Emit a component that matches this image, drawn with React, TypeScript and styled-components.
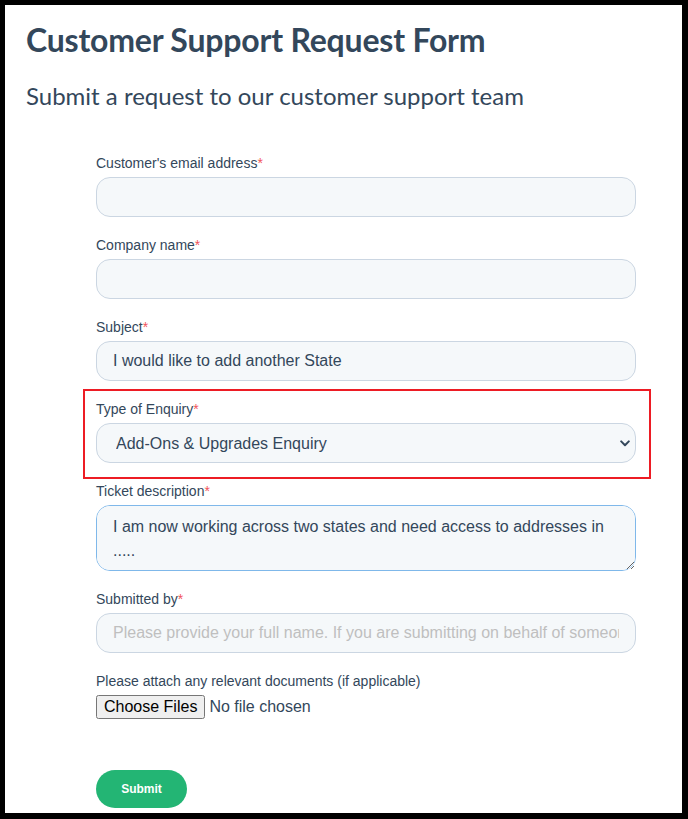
import React from "react";
import styled, { createGlobalStyle } from "styled-components";

const Global = createGlobalStyle`
  html, body { margin: 0; padding: 0; background: #ffffff; }
  * { box-sizing: border-box; }
`;

const Frame = styled.div`
  width: 688px;
  height: 819px;
  border-style: solid;
  border-color: #000;
  border-width: 5px 6px 6px 5px;
  background: #fff;
  padding: 0 0 0 21px;
  overflow: hidden;
  color: #33475b;
`;

const Title = styled.h1`
  margin: 16px 0 0;
  font-family: Lato, "Noto Sans", sans-serif;
  font-weight: 700;
  font-size: 32px;
  line-height: 38px;
  color: #33475b;
  letter-spacing: -0.2px;
`;

const Subtitle = styled.h2`
  margin: 22px 0 0;
  font-family: Lato, "Noto Sans", sans-serif;
  font-weight: 400;
  font-size: 24px;
  line-height: 30px;
  color: #33475b;
`;

const Form = styled.form`
  width: 540px;
  margin: 42px 0 0 70px;
  font-family: "Liberation Sans", Arial, sans-serif;
`;

const Field = styled.div`
  position: relative;
  margin-bottom: 18px;
`;

const Highlight = styled.span`
  position: absolute;
  top: -10px;
  left: -13px;
  right: -15px;
  bottom: -16px;
  border: 2px solid #ed1c24;
  pointer-events: none;
`;

const Label = styled.label`
  display: block;
  font-size: 14px;
  line-height: 20px;
  color: #33475b;
  margin-bottom: 4px;
`;

const Req = styled.span`
  color: #f2545b;
`;

const inputBase = `
  display: block;
  width: 540px;
  font-family: "Liberation Sans", Arial, sans-serif;
  font-size: 16px;
  color: #33475b;
  background: #f5f8fa;
  border: 1px solid #cbd6e2;
  border-radius: 14px;
  outline: none;
`;

const TextInput = styled.input`
  ${inputBase}
  height: 40px;
  padding: 0 16px;
  &::placeholder { color: #bfbfbf; opacity: 1; }
`;

const SelectWrap = styled.div`
  position: relative;
`;

const Select = styled.select`
  ${inputBase}
  height: 40px;
  padding: 0 16px 0 19px;
  appearance: none;
  -webkit-appearance: none;
`;

const Chevron = styled.svg`
  position: absolute;
  right: 6px;
  top: 17px;
  width: 10px;
  height: 7px;
  pointer-events: none;
`;

const TextArea = styled.textarea`
  ${inputBase}
  height: 66px;
  padding: 9px 16px;
  line-height: 24px;
  border-color: #7fb8ea;
  resize: vertical;
`;

const FileInput = styled.input`
  display: block;
  font-family: "Liberation Sans", Arial, sans-serif;
  font-size: 16px;
  color: #33475b;
  margin-top: 0;
`;

const Actions = styled.div`
  margin-top: 51px;
`;

const Submit = styled.button`
  width: 91px;
  height: 38px;
  border: none;
  border-radius: 19px;
  background: #23b574;
  color: #fff;
  font-family: "Liberation Sans", Arial, sans-serif;
  font-weight: 700;
  font-size: 12px;
  cursor: pointer;
`;

export default function App() {
  return (
    <>
      <Global />
      <Frame>
        <Title>Customer Support Request Form</Title>
        <Subtitle>Submit a request to our customer support team</Subtitle>
        <Form onSubmit={(e) => e.preventDefault()}>
          <Field>
            <Label>
              Customer's email address<Req>*</Req>
            </Label>
            <TextInput type="email" />
          </Field>
          <Field>
            <Label>
              Company name<Req>*</Req>
            </Label>
            <TextInput type="text" />
          </Field>
          <Field>
            <Label>
              Subject<Req>*</Req>
            </Label>
            <TextInput type="text" defaultValue="I would like to add another State" />
          </Field>
          <Field>
            <Highlight />
            <Label>
              Type of Enquiry<Req>*</Req>
            </Label>
            <SelectWrap>
              <Select defaultValue="addons">
                <option value="addons">Add-Ons &amp; Upgrades Enquiry</option>
              </Select>
              <Chevron viewBox="0 0 10 7">
                <path d="M1.2 1.4 L5 5.2 L8.8 1.4" fill="none" stroke="#33475b" strokeWidth="2" strokeLinecap="round" strokeLinejoin="round" />
              </Chevron>
            </SelectWrap>
          </Field>
          <Field>
            <Label>
              Ticket description<Req>*</Req>
            </Label>
            <TextArea defaultValue="I am now working across two states and need access to addresses in ....." />
          </Field>
          <Field>
            <Label>
              Submitted by<Req>*</Req>
            </Label>
            <TextInput
              type="text"
              placeholder="Please provide your full name. If you are submitting on behalf of someone else, please include their name too."
            />
          </Field>
          <Field>
            <Label>Please attach any relevant documents (if applicable)</Label>
            <FileInput type="file" multiple />
          </Field>
          <Actions>
            <Submit type="submit">Submit</Submit>
          </Actions>
        </Form>
      </Frame>
    </>
  );
}
